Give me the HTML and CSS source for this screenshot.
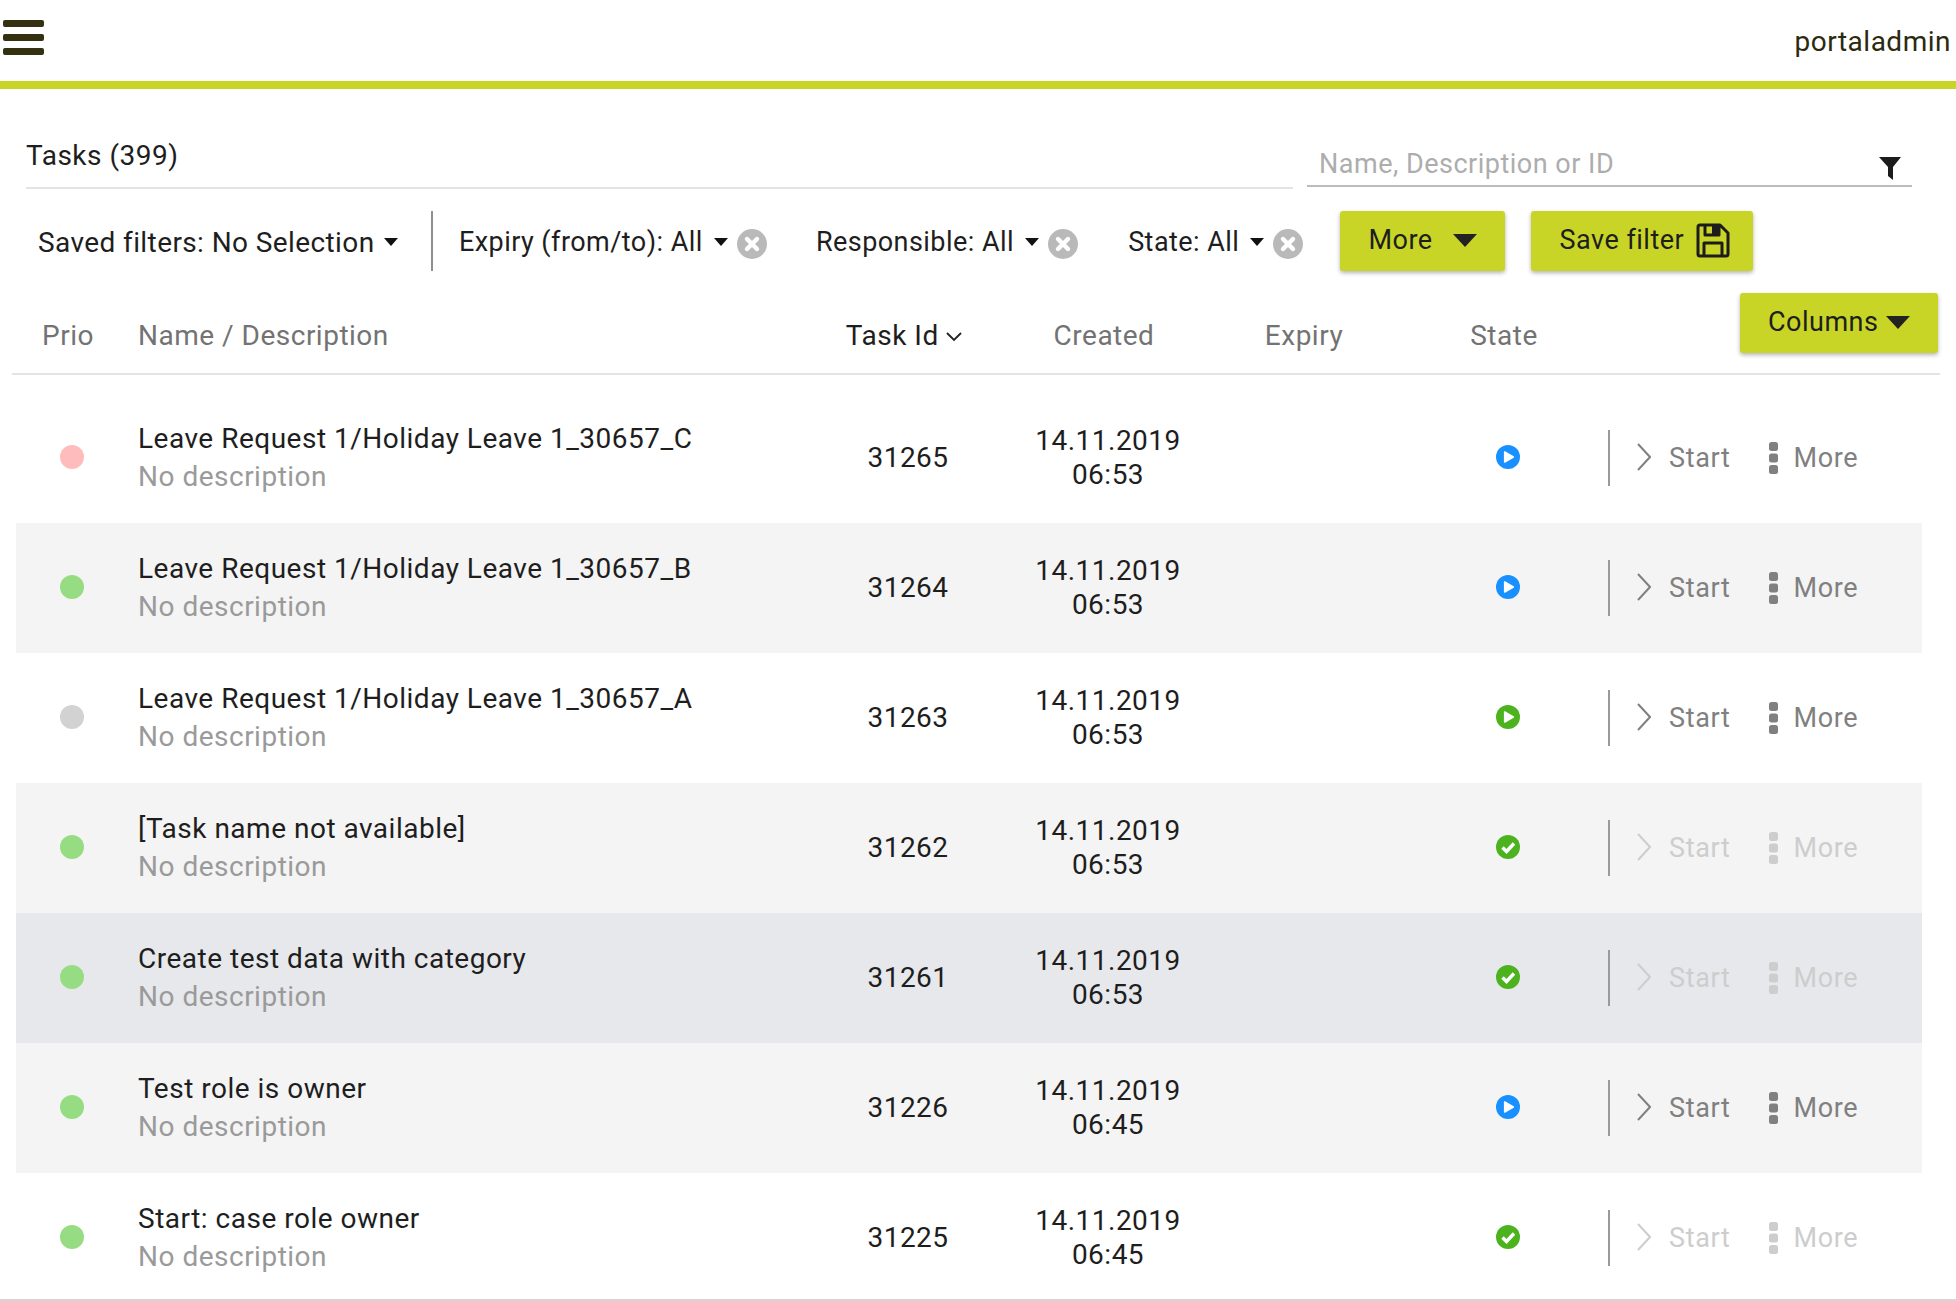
FILE: index.html
```html
<!DOCTYPE html>
<html lang="en">
<head>
    <meta charset="UTF-8">
    <title>Tasks</title>
    <link rel="stylesheet" href="styles.css">
</head>
<body>
  <svg class="sprite" width="0" height="0">
    <symbol id="i-play" viewBox="0 0 24 24"><circle cx="12" cy="12" r="12" fill="#1890ff"/><path d="M8.7 7v10l8.6-5z" fill="#fff" stroke="#fff" stroke-width="1.6" stroke-linejoin="round"/></symbol>
    <symbol id="i-play-green" viewBox="0 0 24 24"><circle cx="12" cy="12" r="12" fill="#4cb31f"/><path d="M8.7 7v10l8.6-5z" fill="#fff" stroke="#fff" stroke-width="1.6" stroke-linejoin="round"/></symbol>
    <symbol id="i-check" viewBox="0 0 24 24"><circle cx="12" cy="12" r="12" fill="#4cb31f"/><path d="M6.5 12.5l4 4 7.5-8" fill="none" stroke="#fff" stroke-width="3.4"/></symbol>
    <symbol id="i-clear" viewBox="0 0 30 30"><circle cx="15" cy="15" r="15" fill="#b9b9b9"/><path d="M10 10l10 10M20 10L10 20" stroke="#fff" stroke-width="4.4" stroke-linecap="round"/></symbol>
    <symbol id="i-chevron" viewBox="0 0 14 28"><path d="M1 1l12 13L1 27" fill="none" stroke="currentColor" stroke-width="2"/></symbol>
    <symbol id="i-dots" viewBox="0 0 9 32"><rect width="9" height="9" rx="2.5" fill="currentColor"/><rect y="11.5" width="9" height="9" rx="2.5" fill="currentColor"/><rect y="23" width="9" height="9" rx="2.5" fill="currentColor"/></symbol>
  </svg>

  <!-- Top bar -->
  <header class="topbar">
    <div class="hamburger"><span></span><span></span><span></span></div>
    <div class="username">portaladmin</div>
  </header>

  <!-- Title and search -->
  <div class="title-row">
    <div class="title">Tasks (399)</div>
    <div class="search">
      <span class="placeholder">Name, Description or ID</span>
      <svg class="funnel" viewBox="0 0 22 23"><path d="M0 0h22L14 10v13l-5-4v-9z" fill="#1c1c1c"/></svg>
    </div>
  </div>

  <!-- Filters -->
  <div class="filters">
    <div class="filter saved">Saved filters: No Selection <i class="caret"></i></div>
    <div class="filter-sep"></div>
    <div class="filter expiry">Expiry (from/to): All <i class="caret"></i><svg class="clear"><use href="#i-clear"/></svg></div>
    <div class="filter responsible">Responsible: All <i class="caret"></i><svg class="clear"><use href="#i-clear"/></svg></div>
    <div class="filter state">State: All <i class="caret"></i><svg class="clear"><use href="#i-clear"/></svg></div>
    <button class="btn btn-more">More <i class="caret big"></i></button>
    <button class="btn btn-save">Save filter
      <svg class="save-icon" viewBox="0 0 34 35"><path d="M4 2h20l8 8v21a2 2 0 0 1-2 2H4a2 2 0 0 1-2-2V4a2 2 0 0 1 2-2z M9 2v10h14V2 M8 33V20h18v13" fill="none" stroke="#1c1c1c" stroke-width="3" stroke-linejoin="round"/><rect x="16" y="3" width="6" height="8" fill="#1c1c1c"/></svg>
    </button>
  </div>

  <!-- Column headers -->
  <div class="table-head">
    <div class="th-prio">Prio</div>
    <div class="th-name">Name / Description</div>
    <div class="th-center th-sorted">Task Id <svg class="sort" viewBox="0 0 16 10"><path d="M1 1l7 7 7-7" fill="none" stroke="#222" stroke-width="1.8"/></svg></div>
    <div class="th-center">Created</div>
    <div class="th-center">Expiry</div>
    <div class="th-center">State</div>
    <button class="btn btn-columns">Columns <i class="caret big"></i></button>
  </div>

  <!-- Task rows -->
  <div class="task-list">
    <div class="task-row">
      <div class="cell-prio"><span class="dot dot-red"></span></div>
      <div class="cell-name"><div class="task-name">Leave Request 1/Holiday Leave 1_30657_C</div><div class="task-desc">No description</div></div>
      <div class="cell-center">31265</div>
      <div class="cell-center cell-date">14.11.2019<br>06:53</div>
      <div class="cell-center"></div>
      <div class="cell-center"><svg class="state-icon"><use href="#i-play"/></svg></div>
      <div class="cell-actions"><svg class="chevron"><use href="#i-chevron"/></svg><span class="act-start">Start</span><svg class="dots"><use href="#i-dots"/></svg><span>More</span></div>
    </div>
    <div class="task-row alt">
      <div class="cell-prio"><span class="dot dot-green"></span></div>
      <div class="cell-name"><div class="task-name">Leave Request 1/Holiday Leave 1_30657_B</div><div class="task-desc">No description</div></div>
      <div class="cell-center">31264</div>
      <div class="cell-center cell-date">14.11.2019<br>06:53</div>
      <div class="cell-center"></div>
      <div class="cell-center"><svg class="state-icon"><use href="#i-play"/></svg></div>
      <div class="cell-actions"><svg class="chevron"><use href="#i-chevron"/></svg><span class="act-start">Start</span><svg class="dots"><use href="#i-dots"/></svg><span>More</span></div>
    </div>
    <div class="task-row">
      <div class="cell-prio"><span class="dot dot-grey"></span></div>
      <div class="cell-name"><div class="task-name">Leave Request 1/Holiday Leave 1_30657_A</div><div class="task-desc">No description</div></div>
      <div class="cell-center">31263</div>
      <div class="cell-center cell-date">14.11.2019<br>06:53</div>
      <div class="cell-center"></div>
      <div class="cell-center"><svg class="state-icon"><use href="#i-play-green"/></svg></div>
      <div class="cell-actions"><svg class="chevron"><use href="#i-chevron"/></svg><span class="act-start">Start</span><svg class="dots"><use href="#i-dots"/></svg><span>More</span></div>
    </div>
    <div class="task-row alt">
      <div class="cell-prio"><span class="dot dot-green"></span></div>
      <div class="cell-name"><div class="task-name">[Task name not available]</div><div class="task-desc">No description</div></div>
      <div class="cell-center">31262</div>
      <div class="cell-center cell-date">14.11.2019<br>06:53</div>
      <div class="cell-center"></div>
      <div class="cell-center"><svg class="state-icon"><use href="#i-check"/></svg></div>
      <div class="cell-actions disabled"><svg class="chevron"><use href="#i-chevron"/></svg><span class="act-start">Start</span><svg class="dots"><use href="#i-dots"/></svg><span>More</span></div>
    </div>
    <div class="task-row selected">
      <div class="cell-prio"><span class="dot dot-green"></span></div>
      <div class="cell-name"><div class="task-name">Create test data with category</div><div class="task-desc">No description</div></div>
      <div class="cell-center">31261</div>
      <div class="cell-center cell-date">14.11.2019<br>06:53</div>
      <div class="cell-center"></div>
      <div class="cell-center"><svg class="state-icon"><use href="#i-check"/></svg></div>
      <div class="cell-actions disabled"><svg class="chevron"><use href="#i-chevron"/></svg><span class="act-start">Start</span><svg class="dots"><use href="#i-dots"/></svg><span>More</span></div>
    </div>
    <div class="task-row alt">
      <div class="cell-prio"><span class="dot dot-green"></span></div>
      <div class="cell-name"><div class="task-name">Test role is owner</div><div class="task-desc">No description</div></div>
      <div class="cell-center">31226</div>
      <div class="cell-center cell-date">14.11.2019<br>06:45</div>
      <div class="cell-center"></div>
      <div class="cell-center"><svg class="state-icon"><use href="#i-play"/></svg></div>
      <div class="cell-actions"><svg class="chevron"><use href="#i-chevron"/></svg><span class="act-start">Start</span><svg class="dots"><use href="#i-dots"/></svg><span>More</span></div>
    </div>
    <div class="task-row">
      <div class="cell-prio"><span class="dot dot-green"></span></div>
      <div class="cell-name"><div class="task-name">Start: case role owner</div><div class="task-desc">No description</div></div>
      <div class="cell-center">31225</div>
      <div class="cell-center cell-date">14.11.2019<br>06:45</div>
      <div class="cell-center"></div>
      <div class="cell-center"><svg class="state-icon"><use href="#i-check"/></svg></div>
      <div class="cell-actions disabled"><svg class="chevron"><use href="#i-chevron"/></svg><span class="act-start">Start</span><svg class="dots"><use href="#i-dots"/></svg><span>More</span></div>
    </div>
  </div>
</body>
</html>
```

FILE: styles.css
```css
/* Base */
html, body {
    height: 100%;
}

body {
    margin: 0;
    overflow: hidden;
    background: #fff;
    color: #1e1e1e;
    font-family: Roboto, "Liberation Sans", sans-serif;
    font-size: 28px;
    letter-spacing: 0.5px;
}

.sprite {
    display: block;
    height: 0;
}

/* Top bar */
.topbar {
    display: flex;
    align-items: center;
    justify-content: space-between;
    box-sizing: border-box;
    height: 89px;
    padding: 0 5px 6px 3px;
    border-bottom: 8px solid #c8d527;
}

.hamburger {
    display: flex;
    flex-direction: column;
    gap: 7px;
    width: 41px;
}

.hamburger span {
    height: 7px;
    border-radius: 2px;
    background: #353110;
}

.username {
    padding-top: 7px;
    color: #2b2a10;
}

/* Title and search */
.title-row {
    display: flex;
    align-items: flex-end;
    height: 100px;
    padding-left: 26px;
}

.title {
    box-sizing: border-box;
    width: 1267px;
    height: 50px;
    border-bottom: 2px solid #e4e4e4;
}

.search {
    display: flex;
    align-items: center;
    justify-content: space-between;
    box-sizing: border-box;
    width: 605px;
    height: 52px;
    margin-left: 14px;
    margin-bottom: 2px;
    padding: 8px 11px 0 12px;
    border-bottom: 2px solid #bcbcbc;
    font-size: 27px;
}

.placeholder {
    color: #adadad;
}

.funnel {
    width: 22px;
    height: 23px;
    margin-top: 9px;
}

/* Filters */
.filters {
    display: flex;
    align-items: center;
    height: 60px;
    margin-top: 22px;
    padding-left: 38px;
    font-size: 27px;
}

.filter {
    display: flex;
    align-items: center;
    padding-top: 2px;
    white-space: pre;
    letter-spacing: 0.45px;
}

.saved {
    font-size: 28px;
    letter-spacing: 0.4px;
}

.saved .caret {
    margin-left: 2px;
}

.filter-sep {
    width: 2px;
    height: 60px;
    margin: 0 26px 0 33px;
    background: #8f8f8f;
}

.responsible {
    margin-left: 49px;
}

.state {
    margin-left: 50px;
}

.caret {
    display: inline-block;
    width: 0;
    height: 0;
    margin-left: 4px;
    border-left: 7px solid transparent;
    border-right: 7px solid transparent;
    border-top: 8px solid #111;
}

.caret.big {
    margin-left: 0;
    border-left-width: 12px;
    border-right-width: 12px;
    border-top-width: 13px;
    border-top-color: #222;
}

.clear {
    width: 30px;
    height: 30px;
    margin: 4px 0 0 9px;
}

.btn {
    display: flex;
    align-items: center;
    justify-content: space-between;
    box-sizing: border-box;
    height: 60px;
    padding: 0 28px 2px;
    border: 0;
    border-radius: 3px;
    background: #c8d527;
    box-shadow: 0 2px 4px rgba(0, 0, 0, 0.3);
    color: #1e1e1e;
    font: inherit;
    letter-spacing: inherit;
}

.btn-more {
    width: 165px;
    margin-left: 37px;
}

.btn-save {
    width: 222px;
    margin-left: 26px;
    padding-right: 23px;
}

.save-icon {
    width: 34px;
    height: 35px;
}

.btn-columns {
    width: 198px;
    margin-left: 136px;
    font-size: 27px;
}

/* Table */
.table-head,
.task-row {
    display: grid;
    align-items: center;
}

.table-head {
    grid-template-columns: 126px 666px 200px 200px 200px 200px 1fr;
    align-items: start;
    box-sizing: border-box;
    height: 104px;
    margin: 0 16px 0 12px;
    padding-top: 22px;
    border-bottom: 2px solid #e4e4e4;
    color: #737373;
    line-height: 33px;
}

.table-head > div {
    margin-top: 26px;
}

.th-prio {
    padding-left: 30px;
}

.th-center {
    text-align: center;
}

.th-sorted {
    color: #1e1e1e;
}

.sort {
    width: 16px;
    height: 10px;
    margin-bottom: 3px;
}

.task-list {
    box-sizing: border-box;
    height: 926px;
    padding-top: 18px;
    overflow: hidden;
    border-bottom: 2px solid #d5d5d5;
}

.task-row {
    grid-template-columns: 122px 670px 200px 200px 200px 200px 1fr;
    box-sizing: border-box;
    height: 130px;
    margin: 0 34px 0 16px;
    padding-bottom: 2px;
}

.task-row.alt {
    background: #f4f4f4;
}

.task-row.selected {
    background: #e7e8ec;
}

.cell-prio {
    padding-left: 44px;
}

.dot {
    display: block;
    width: 24px;
    height: 24px;
    border-radius: 50%;
}

.dot-red {
    background: #ffbcbc;
}

.dot-green {
    background: #96dc82;
}

.dot-grey {
    background: #d2d2d2;
}

.cell-name {
    padding-top: 2px;
}

.task-name {
    line-height: 38px;
}

.task-desc {
    color: #9a9a9a;
    line-height: 38px;
}

.cell-center {
    text-align: center;
}

.cell-date {
    padding-top: 2px;
    line-height: 34px;
}

.state-icon {
    display: block;
    width: 24px;
    height: 24px;
    margin: 0 auto;
}

.cell-actions {
    display: flex;
    align-items: center;
    height: 56px;
    margin-top: 2px;
    padding-left: 27px;
    border-left: 2px solid #9a9a9a;
    color: #808080;
    font-size: 27px;
    letter-spacing: 0.65px;
}

.cell-actions.disabled {
    color: #cdcdcd;
}

.chevron {
    width: 14px;
    height: 28px;
    margin-bottom: 3px;
}

.act-start {
    margin-left: 18px;
}

.dots {
    width: 9px;
    height: 32px;
    margin: 0 15px 0 39px;
}
```
